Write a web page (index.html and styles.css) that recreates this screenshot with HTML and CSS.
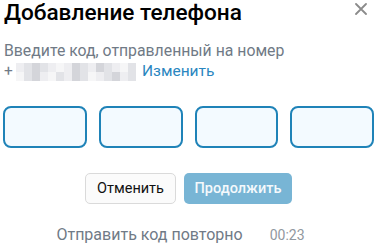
FILE: index.html
```html
<!DOCTYPE html>
<html lang="ru">
<head>
<meta charset="utf-8">
<link rel="stylesheet" href="styles.css">
</head>
<body>
<div class="modal">
  <div class="header">
    <h1 class="title">Добавление телефона</h1>
    <svg class="close" width="12" height="12" viewBox="0 0 12 12"><path d="M1 1L11 11M11 1L1 11" stroke="#8b8b8b" stroke-width="1.8" stroke-linecap="round"/></svg>
  </div>
  <p class="subtitle">Введите код, отправленный на номер</p>
  <div class="phone-row">
    <span class="plus">+</span>
    <span class="blur">
      <i class="c1"></i><i class="c2"></i><i class="c3"></i><i class="c2"></i><i class="c1"></i><i class="c4"></i><i class="c1"></i><i class="c3"></i><i class="c2"></i><i class="c1"></i><i class="c3"></i><i class="c2"></i><i class="c1"></i><i class="c4"></i><i class="c2"></i>
      <i class="c4"></i><i class="c2"></i><i class="c3"></i><i class="c1"></i><i class="c4"></i><i class="c2"></i><i class="c1"></i><i class="c3"></i><i class="c2"></i><i class="c4"></i><i class="c1"></i><i class="c2"></i><i class="c3"></i><i class="c1"></i><i class="c2"></i>
    </span>
    <a class="change">Изменить</a>
  </div>
  <div class="code-boxes">
    <div class="code-box"></div>
    <div class="code-box"></div>
    <div class="code-box"></div>
    <div class="code-box"></div>
  </div>
  <div class="actions">
    <button class="btn btn-cancel">Отменить</button>
    <button class="btn btn-primary">Продолжить</button>
  </div>
  <div class="resend">
    <span class="resend-text">Отправить код повторно</span>
    <span class="timer">00:23</span>
  </div>
</div>
</body>
</html>
```
FILE: styles.css
```css
* { box-sizing: border-box; }
html, body {
  margin: 0;
  padding: 0;
  background: #ffffff;
  font-family: Roboto, "Noto Sans", Arial, sans-serif;
}
.modal {
  width: 380px;
  height: 251px;
  display: flex;
  flex-direction: column;
  overflow: hidden;
}
.header {
  display: flex;
  justify-content: space-between;
  align-items: flex-start;
  padding: 0 13px 0 4px;
}
.title {
  margin: 0;
  font-size: 22.6px;
  font-weight: 500;
  line-height: 26px;
  color: #000;
}
.close {
  margin-top: 3px;
}
.subtitle {
  margin: 14px 0 0 4px;
  font-size: 15.8px;
  line-height: 21px;
  color: #707a86;
}
.phone-row {
  display: flex;
  align-items: center;
  margin-left: 4px;
  height: 21px;
  font-size: 15.5px;
  line-height: 21px;
}
.plus {
  color: #707a86;
  width: 12px;
}
.blur {
  display: grid;
  grid-template-columns: repeat(15, 8px);
  grid-template-rows: 9px 9px;
  margin-right: 6px;
}
.blur i { display: block; }
.blur .c1 { background: #eeeef1; }
.blur .c2 { background: #e2e3e7; }
.blur .c3 { background: #d4d5da; }
.blur .c4 { background: #f6f6f7; }
.change {
  color: #2a86c0;
}
.code-boxes {
  display: grid;
  grid-template-columns: repeat(4, 1fr);
  gap: 12px;
  margin: 24px 6px 0 3px;
}
.code-box {
  height: 42px;
  border: 2px solid #1f83b8;
  border-radius: 8px;
  background: #f3faff;
}
.actions {
  display: flex;
  justify-content: center;
  gap: 8px;
  margin-top: 25px;
  padding-right: 3px;
}
.btn {
  height: 31px;
  border-radius: 5px;
  font-family: Roboto, "Noto Sans", Arial, sans-serif;
  font-size: 14.5px;
  padding: 0;
}
.btn-cancel {
  width: 91px;
  background: #fbfbfb;
  border: 1px solid #dadada;
  color: #111;
}
.btn-primary {
  width: 108px;
  background: #78b5d5;
  border: none;
  color: #f4f9fc;
  font-weight: 500;
}
.resend {
  display: flex;
  justify-content: center;
  align-items: baseline;
  gap: 27px;
  margin-top: 21px;
  padding-right: 19px;
}
.resend-text {
  font-size: 16px;
  color: #707a86;
}
.timer {
  font-size: 14px;
  color: #9198a0;
}
```
